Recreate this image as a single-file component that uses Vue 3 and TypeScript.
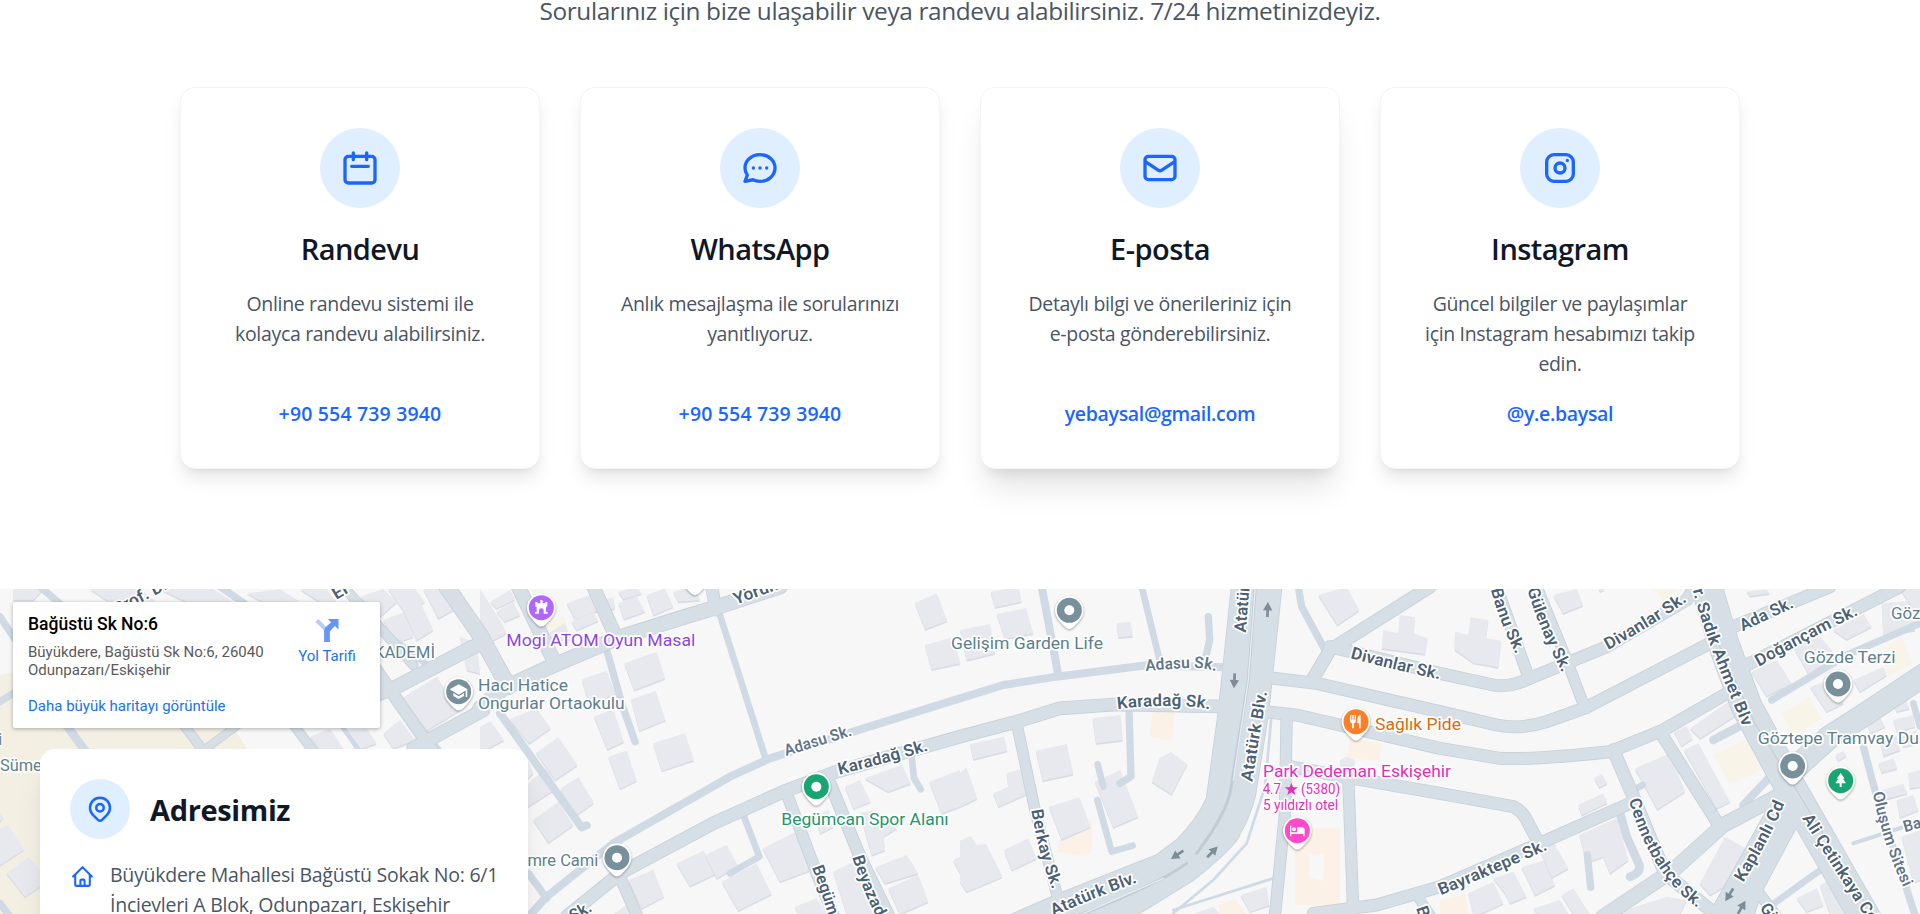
<script setup lang="ts">
interface ContactCard {
  title: string
  text: string
  link: string
  icon: string
  phone?: boolean
  active?: boolean
}

interface StreetLabel {
  text: string
  d: string
  len: number
  minor?: boolean
}

interface PlaceLabel {
  text: string
  x: number
  y: number
  len: number
  color: string
  size?: number
}

interface Pin {
  x: number
  y: number
  color: string
  glyph: string
}

const cards: ContactCard[] = [
  {
    title: 'Randevu',
    text: 'Online randevu sistemi ile kolayca randevu alabilirsiniz.',
    link: '+90 554 739 3940',
    icon: 'M8 7V3m8 4V3m-9 8h10M5 21h14a2 2 0 002-2V7a2 2 0 00-2-2H5a2 2 0 00-2 2v12a2 2 0 002 2z',
    phone: true,
  },
  {
    title: 'WhatsApp',
    text: 'Anlık mesajlaşma ile sorularınızı yanıtlıyoruz.',
    link: '+90 554 739 3940',
    icon: 'M8 12h.01M12 12h.01M16 12h.01M21 12c0 4.418-4.03 8-9 8a9.863 9.863 0 01-4.255-.949L3 20l1.395-3.72C3.512 15.042 3 13.574 3 12c0-4.418 4.03-8 9-8s9 3.582 9 8z',
    phone: true,
  },
  {
    title: 'E-posta',
    text: 'Detaylı bilgi ve önerileriniz için e-posta gönderebilirsiniz.',
    link: 'yebaysal@gmail.com',
    icon: 'M3 8l7.89 5.26a2 2 0 002.22 0L21 8M5 19h14a2 2 0 002-2V7a2 2 0 00-2-2H5a2 2 0 00-2 2v10a2 2 0 002 2z',
    active: true,
  },
  {
    title: 'Instagram',
    text: 'Güncel bilgiler ve paylaşımlar için Instagram hesabımızı takip edin.',
    link: '@y.e.baysal',
    icon: 'M8.4 4h7.2a4.4 4.4 0 014.4 4.4v7.2a4.4 4.4 0 01-4.4 4.4H8.4A4.4 4.4 0 014 15.6V8.4A4.4 4.4 0 018.4 4zM15 12a3 3 0 11-6 0 3 3 0 016 0zM16.4 7.5h.01',
  },
]

// Map geometry is in thirds of a pixel.
const parks: string[] = [
  'M0 285L600 160L700 444L742 507V1002H0Z',
]
const warm: string[] = [
  'M3450 470L3458 392L3524 390L3516 484Z',
  'M3170 815L3190 735L3277 718L3274 822L3250 828Z',
  'M4040 535L4050 478L4146 490L4138 542Z',
  'M3885 975V820L3940 745H4020V978ZM3928 822V892L3970 902L3972 824Z',
  'M3655 975L3705 957L3740 1002H3660Z',
  'M4320 960L4395 942L4405 1002H4320Z',
]
const sand: string[] = [
  'M5140 525L5238 478L5288 570L5190 612Z',
  'M5342 402L5425 352L5464 415L5384 464Z',
  'M5645 240L5655 205L5705 172L5738 250L5665 290Z',
  'M4960 27H5040L4990 62Z',
  'M1590 27H1650L1600 42Z',
  'M1625 145L1690 105L1702 140L1640 155Z',
]

const buildings: string[] = [
  '40,27 130,27 100,60 40,60', '270,27 420,27 470,66 330,66', '480,27 640,27 700,66 560,66',
  '740,40 840,27 900,66 790,66', '900,27 980,27 1010,66 960,66',
  '1080,50 1150,27 1190,66 1140,110', '1150,120 1230,90 1240,170 1185,190', '1165,27 1245,27 1275,66 1210,92',
  '1210,90 1260,65 1300,150 1250,180', '1270,27 1320,27 1370,85 1315,115',
  '1205,355 1310,290 1380,390 1275,455', '1380,170 1430,190 1440,280 1400,270',
  '930,470 990,446 1030,506 960,507', '1040,450 1100,446 1130,490 1080,507', '1150,460 1200,420 1245,480 1180,505',
  '0,745 25,735 72,808 0,855', '20,880 85,832 120,870 120,920 75,950', '0,700 10,712 0,725',
  '1440,27 1500,120 1460,150 1440,120', '1470,65 1530,30 1545,58 1490,85', '1490,95 1540,65 1560,105 1515,125',
  '1450,150 1500,118 1520,160 1470,185', '1630,170 1695,128 1712,178 1650,180', '1700,70 1770,45 1800,90 1725,118', '1715,125 1780,97 1795,122 1730,150',
  '1855,35 1910,20 1925,40 1870,58', '1855,70 1910,48 1935,95 1872,117', '1940,45 1995,25 2020,80 1960,105', '2020,35 2080,20 2100,60 2035,65', '1810,60 1840,52 1845,85 1820,90',
  '1745,298 1820,272 1845,340 1770,380', '1873,250 1970,215 1995,295 1903,330', '1893,358 1967,333 1997,420 1918,452',
  '1782,410 1840,388 1872,485 1822,508', '1825,530 1880,512 1910,602 1860,626', '1960,490 2055,460 2082,540 1985,572',
  '1528,418 1610,385 1652,445 1588,490', '1608,518 1675,472 1732,555 1665,600', '1682,625 1735,592 1782,668 1720,712',
  '1440,440 1472,424 1512,480 1460,507 1440,507', '1584,610 1640,565 1670,625 1584,680', '1600,720 1675,665 1720,735 1645,788',
  '1584,540 1600,580 1584,595', '2030,850 2110,812 2150,880 2070,918', '2115,825 2180,795 2215,858 2150,895',
  '1885,900 1960,870 1992,950 1925,985', '2165,905 2270,850 2315,942 2215,992', '1840,1002 1880,975 1920,1002',
  '2288,805 2385,757 2432,870 2340,905', '2385,980 2450,955 2480,1002 2395,1002', '2535,620 2580,600 2612,665 2560,686',
  '2594,595 2705,555 2732,610 2665,635', '2580,700 2620,690 2690,745 2650,770 2655,810 2615,825', '2445,710 2485,690 2500,740 2460,760',
  '2788,605 2880,570 2880,680 2825,700', '2626,862 2720,825 2755,880 2655,910', '2665,925 2755,885 2785,965 2700,1002', '2500,875 2560,845 2640,1002 2540,1002',
  '2745,68 2810,40 2842,122 2775,148', '2775,195 2860,172 2880,250 2795,268', '2860,840 2880,830 2880,880', '2880,150 2970,132 2985,220 2900,240',
  '2972,35 3055,20 3065,65 2985,82', '2990,102 3078,84 3100,160 3015,175', '3350,130 3392,125 3398,168 3355,172',
  '2910,492 3012,470 3022,512 2920,538', '3108,512 3200,492 3220,582 3128,602', '3278,415 3362,405 3368,480 3288,490',
  '3285,605 3360,570 3415,710 3340,742', '3512,516 3562,552 3515,642 3455,605 3478,535', '3147,680 3238,652 3272,740 3185,778',
  '2880,578 2900,564 2932,655 2880,680', '3020,580 3060,568 3085,640 2995,680 2980,640 3025,620', '2880,782 2912,768 2930,795 2958,792 3008,890 2900,935 2880,905',
  '3012,810 3085,775 3110,835 3035,870', '3722,945 3800,920 3808,975 3750,995', '3580,1002 3640,980 3660,1002', '4020,540 4040,530 4065,540 4062,558 4022,555',
  '3955,45 4040,20 4078,90 4012,135', '4150,150 4195,160 4200,105 4245,112 4240,160 4282,175 4275,222 4145,205',
  '4365,155 4405,165 4412,112 4465,120 4458,175 4503,182 4495,262 4420,248 4364,208',
  '4660,45 4730,27 4750,75 4690,100', '4795,25 4815,27 4800,35', '5240,35 5300,27 5310,40 5250,48',
  '4905,565 5010,520 5055,635 4972,688', '4735,675 4810,640 4822,668 4745,705', '4783,595 4805,582 4822,610 4798,622',
  '4738,765 4850,715 4885,840 4830,880 4810,830 4760,848', '5022,455 5060,438 5078,475 5045,498', '5070,445 5185,365 5225,395 5100,475',
  '5052,510 5095,490 5190,665 5150,685', '5100,910 5175,770 5245,810 5240,880 5130,945',
  '4405,940 4480,905 4510,970 4440,1002 4420,1002', '4480,895 4540,875 4580,950 4530,970 4515,940', '4565,862 4635,840 4665,915 4605,945',
  '4620,810 4660,785 4705,865 4655,892', '4602,985 4680,960 4705,1002 4610,1002', '4685,945 4720,925 4770,1002 4720,1002', '4840,1002 5000,950 5060,960 5040,1002',
  '5255,275 5330,240 5375,310 5300,348', '5430,320 5520,290 5530,370 5480,395', '5380,200 5460,170 5520,240 5430,290', '5500,150 5590,103 5615,140 5540,178', '5645,70 5740,62 5745,150 5650,165', '5700,27 5760,27 5760,95 5740,85',
  '5560,300 5650,260 5660,285 5580,335', '5680,370 5720,360 5728,385 5690,395', '5600,425 5640,412 5655,440 5610,460', '5680,420 5740,405 5745,440 5690,455',
  '5640,480 5690,465 5700,510 5650,528', '5700,470 5750,450 5755,490 5710,500', '5635,550 5680,535 5692,565 5645,578', '5645,630 5710,612 5722,640 5655,658',
  '5690,660 5740,645 5755,690 5700,712', '5725,580 5760,570 5760,620 5730,625', '5705,770 5760,750 5760,900 5740,905', '5390,955 5450,925 5470,975 5420,995', '5460,915 5510,890 5560,1002 5490,1002', '5506,525 5530,512 5540,527 5515,542',
]

const minorRoads: { d: string; w: number }[] = [
  { d: 'M0 110L60 200', w: 22 }, { d: 'M0 365L80 315', w: 22 }, { d: 'M195 430L265 525', w: 26 },
  { d: 'M1020 430L1090 530', w: 14 }, { d: 'M120 20L190 80M660 20L740 75', w: 22 }, { d: 'M1030 20L1180 180L1290 260', w: 20 },
  { d: 'M0 970L30 1010', w: 22 }, { d: 'M1130 260L1210 380L1320 520', w: 24 },
  { d: 'M2155 90L2295 530', w: 20 }, { d: 'M1820 210L1865 370L1905 485', w: 22 }, { d: 'M1500 400L1745 742L1760 736', w: 24 },
  { d: 'M1590 1005L1640 950L1840 790L2190 590L2310 535L2560 455L2880 355L3010 315L3170 290L3440 256L3680 262', w: 24 },
  { d: 'M1585 880L1640 955', w: 22 }, { d: 'M2232 710L2278 830L2190 880', w: 20 }, { d: 'M2735 530L2742 595L2762 628', w: 20 },
  { d: 'M3125 20L3175 285', w: 24 }, { d: 'M3425 20L3480 245', w: 20 }, { d: 'M3625 110L3629 180L3615 240', w: 22 },
  { d: 'M3387 390L3393 590L3360 610', w: 22 }, { d: 'M3293 553L3310 620M3292 660L3335 815L3398 797', w: 20 },
  { d: 'M3895 20L3905 80L3975 210', w: 22 }, { d: 'M3815 400L3795 620L3740 790L3640 900L3520 1000M3520 990L3820 895', w: 8 },
  { d: 'M5315 360L5540 225L5760 130', w: 22 }, { d: 'M5590 500L5630 650L5745 1005', w: 22 }, { d: 'M5560 790L5720 738', w: 12 }, { d: 'M5740 370L5760 440', w: 20 },
  { d: 'M5140 480L5235 430', w: 26 }, { d: 'M5310 590L5230 675', w: 24 }, { d: 'M4860 700L4880 770L4918 855Q4922 880 4890 890', w: 26 },
  { d: 'M4762 825L4772 922', w: 22 }, { d: 'M4905 628L4928 615', w: 20 }, { d: 'M5320 972L5440 885L5480 860', w: 20 },
]

const majorRoads: { d: string; w: number }[] = [
  { d: 'M540 420L612 515', w: 26 }, { d: 'M612 510L760 400', w: 22 }, { d: 'M870 420L945 520', w: 26 },
  { d: 'M1030 20L1240 255', w: 26 }, { d: 'M1140 340L1180 325L1440 190', w: 40 }, { d: 'M1080 200L1310 530', w: 34 },
  { d: 'M1240 505L1450 390', w: 38 }, { d: 'M1340 20L1440 165L1525 320', w: 46 },
  { d: 'M1440 385L1510 325L1640 265L1850 175L2040 115L2170 75L2340 20', w: 42 },
  { d: 'M1555 20L1665 250', w: 40 }, { d: 'M1780 20L1845 165', w: 38 }, { d: 'M2135 20L2148 90', w: 34 },
  { d: 'M1700 1010L1860 880L2140 730L2350 635L2510 575L2880 470L3050 425L3180 385L3350 373L3680 380', w: 36 },
  { d: 'M1860 890L1910 1005', w: 32 }, { d: 'M2360 640L2450 880L2500 1005', w: 32 }, { d: 'M2490 610L2580 830L2665 1005', w: 34 },
  { d: 'M3050 430L3105 690L3175 960', w: 30 },
  { d: 'M3780 290L3950 310L4320 395L4490 435Q4560 450 4640 425L4760 382L5130 190', w: 34 },
  { d: 'M3790 395L3890 405L4320 505L4500 535Q4600 540 4830 515L4990 450L5190 335', w: 34 },
  { d: 'M3860 410L3855 700L3825 1005', w: 32 }, { d: 'M3870 560L4060 595L4320 640L4540 680Q4570 695 4585 730L4620 795', w: 34 },
  { d: 'M4045 600L4060 1005', w: 32 }, { d: 'M3940 295L3990 210L4290 20', w: 36 },
  { d: 'M3990 200L4320 280L4480 315Q4530 325 4600 290L4820 200L5060 60L5085 20', w: 34 },
  { d: 'M3940 1000L4130 975L4320 920L4620 790L4890 670', w: 34 }, { d: 'M4260 960L4290 1005', w: 28 },
  { d: 'M4490 20L4585 290', w: 32 }, { d: 'M4610 20L4700 240L4755 385', w: 30 },
  { d: 'M5200 140L5490 20', w: 34 }, { d: 'M5240 255L5700 20', w: 34 }, { d: 'M5390 560L5490 470L5600 400L5780 280', w: 66 },
  { d: 'M5350 640L5170 735L5020 870L4810 1010', w: 42 }, { d: 'M4980 455L5160 740', w: 34 },
  { d: 'M4840 510L4900 650L4995 880L5150 1005', w: 36 }, { d: 'M5270 930L5330 1010', w: 30 },
  { d: 'M5120 20L5170 190L5240 380L5370 620L5610 1040', w: 90 },
]

const boulevards: string[] = [
  'M3695 20L3655 400L3620 655Q3590 720 3530 780L3470 825L3180 940L3030 1005H3410L3580 900Q3680 820 3710 780Q3750 710 3765 650L3805 400L3845 20Z',
  'M5340 620L5140 980L5110 1010H5260L5285 935L5400 720Z',
]

const streetLabels: StreetLabel[] = [
  { text: 'Prof. Dr.', d: 'M350 105L530 12', len: 190 },
  { text: 'Er', d: 'M1009 60L1075 20', len: 50 },
  { text: 'Yörük', d: 'M2207 74L2350 22', len: 138 },
  { text: 'Adasu Sk.', d: 'M2358 528L2570 462', len: 210, minor: true },
  { text: 'Karadağ Sk.', d: 'M2518 584Q2660 550 2795 508', len: 278 },
  { text: 'Begüm', d: 'M2436 862Q2468 950 2488 1015', len: 154 },
  { text: 'Beyazad', d: 'M2557 832Q2587 930 2632 1015', len: 195 },
  { text: 'Sk.', d: 'M1720 1025L1782 990', len: 68 },
  { text: 'Adasu Sk.', d: 'M3437 273Q3540 264 3580 264T3652 275', len: 212, minor: true },
  { text: 'Karadağ Sk.', d: 'M3352 387Q3450 376 3530 378T3632 390', len: 278 },
  { text: 'Atatürk', d: 'M3737 158L3752 -15', len: 166 },
  { text: 'Atatürk Blv.', d: 'M3757 606Q3777 470 3802 332', len: 274 },
  { text: 'Atatürk Blv.', d: 'M3160 1008Q3290 950 3410 908', len: 272 },
  { text: 'Berkay Sk.', d: 'M3094 690Q3116 830 3160 934', len: 248 },
  { text: 'Divanlar Sk.', d: 'M4050 234Q4190 272 4320 298', len: 276 },
  { text: 'Banu Sk.', d: 'M4472 28Q4501 136 4548 222', len: 210 },
  { text: 'Gülenay Sk.', d: 'M4582 28Q4616 146 4686 276', len: 272 },
  { text: 'Divanlar Sk.', d: 'M4824 210Q4950 142 5060 64', len: 280 },
  { text: 'r. Sadık Ahmet Blv', d: 'M5078 30C5118 180 5168 290 5228 440', len: 438 },
  { text: 'Ada Sk.', d: 'M5228 154L5385 80', len: 172 },
  { text: 'Doğançam Sk.', d: 'M5276 260Q5430 174 5572 106', len: 338 },
  { text: 'Bayraktepe Sk.', d: 'M4322 946Q4480 882 4640 810', len: 350 },
  { text: 'Cennetbahçe Sk.', d: 'M4886 660Q4948 880 5096 986', len: 392 },
  { text: 'Kaplanlı Cd', d: 'M5230 908Q5302 790 5354 670', len: 268 },
  { text: 'Ali Çetinkaya Cd', d: 'M5406 715Q5498 860 5608 1030', len: 375 },
  { text: 'Oluşum Sitesi', d: 'M5618 638Q5648 790 5710 922', len: 300, minor: true },
  { text: 'Ba', d: 'M5715 757L5770 741', len: 54, minor: true },
  { text: 'B', d: 'M4248 985L4262 1025', len: 33 },
  { text: 'Gü', d: 'M5278 985L5320 1040', len: 62 },
]

const slate = '#5e7f8e'
const places: PlaceLabel[] = [
  { text: 'AKADEMİ', x: 1089, y: 235, len: 216, color: slate },
  { text: 'Sümer', x: 0, y: 573, len: 142, color: slate },
  { text: 'i', x: -4, y: 494, len: 10, color: slate },
  { text: 'Hacı Hatice', x: 1434, y: 334, len: 270, color: slate },
  { text: 'Ongurlar Ortaokulu', x: 1434, y: 387, len: 440, color: slate },
  { text: 'Mogi ATOM Oyun Masal', x: 1519, y: 199, len: 567, color: '#8f45e0' },
  { text: 'Emre Cami', x: 1554, y: 858, len: 241, color: slate },
  { text: 'Begümcan Spor Alanı', x: 2344, y: 735, len: 502, color: '#22966b' },
  { text: 'Gelişim Garden Life', x: 2853, y: 206, len: 456, color: slate },
  { text: 'Sağlık Pide', x: 4125, y: 450, len: 258, color: '#d96a10' },
  { text: 'Park Dedeman Eskişehir', x: 3789, y: 591, len: 564, color: '#e62eb8' },
  { text: '4.7', x: 3788, y: 642, len: 55, color: '#e62eb8', size: 42 },
  { text: '(5380)', x: 3903, y: 642, len: 117, color: '#e62eb8', size: 42 },
  { text: '5 yıldızlı otel', x: 3789, y: 690, len: 225, color: '#e62eb8', size: 42 },
  { text: 'Gözde Terzi', x: 5411, y: 248, len: 276, color: slate },
  { text: 'Göztepe Tramvay Du', x: 5273, y: 493, len: 484, color: slate },
  { text: 'Göz', x: 5673, y: 117, len: 88, color: slate },
]

const pinSlate = '#78909c'
const dot = 'M-15 0A15 15 0 1 0 15 0A15 15 0 1 0 -15 0Z'
const pins: Pin[] = [
  { x: 1376, y: 335, color: pinSlate, glyph: 'M0 -22L27 -7L0 9L-27 -7ZM-16 4L0 14L16 4V13L0 22L-16 13ZM21 -4H26V16H21Z' },
  { x: 1624, y: 83, color: '#b066ff', glyph: 'M-3 -23H3V-21L6 -18L3 -15V-13H12V-17H18V-3H14V13H19V18H7V9Q7 2 0 2Q-7 2 -7 9V18H-19V13H-14V-3H-18V-17H-12V-13H-3Z' },
  { x: 2085, y: -11, color: pinSlate, glyph: dot },
  { x: 2449, y: 620, color: '#17a673', glyph: dot },
  { x: 1851, y: 833, color: pinSlate, glyph: dot },
  { x: 3208, y: 91, color: pinSlate, glyph: dot },
  { x: 4068, y: 425, color: '#ff7f27', glyph: 'M-18 -20H-14V-6H-11V-20H-7V-6H-4V-20H0V-3Q0 3 -6 5V20H-12V5Q-18 3 -18 -3ZM14 -20V20H9V5H4V-8Q5 -18 14 -20Z' },
  { x: 3892, y: 752, color: '#ff4acb', glyph: 'M-22 -15H-18V5H-1V-10H14Q22 -10 22 -2V17H18V10H-18V17H-22ZM-4 -4A6 6 0 1 1 -16 -4A6 6 0 1 1 -4 -4Z' },
  { x: 5514, y: 312, color: pinSlate, glyph: dot },
  { x: 5378, y: 558, color: pinSlate, glyph: dot },
  { x: 5522, y: 602, color: '#17a673', glyph: 'M0 -23L12 -6H7L16 8H3V19H-3V8H-16L-7 -6H-12Z' },
]

const arrows = [
  { x: 3803, y: 89, r: 2 }, { x: 3703, y: 302, r: 183 }, { x: 3532, y: 824, r: 236 },
  { x: 3637, y: 816, r: 45 }, { x: 5188, y: 944, r: 212 }, { x: 5225, y: 982, r: 30 },
]
</script>

<template>
  <main class="page">
    <section class="contact">
      <header class="intro">
        <p>Sorularınız için bize ulaşabilir veya randevu alabilirsiniz. 7/24 hizmetinizdeyiz.</p>
      </header>
      <div class="cards">
        <article v-for="card in cards" :key="card.title" class="card" :class="{ active: card.active }">
          <div class="badge large">
            <svg class="icon" viewBox="0 0 24 24"><path :d="card.icon" /></svg>
          </div>
          <h3>{{ card.title }}</h3>
          <p class="text">{{ card.text }}</p>
          <a class="link" :class="{ phone: card.phone }">{{ card.link }}</a>
        </article>
      </div>
    </section>

    <section class="location">
      <svg class="map" viewBox="0 27 5760 975" preserveAspectRatio="none">
        <rect x="0" y="27" width="5760" height="975" fill="#f7f7f7" />
        <path v-for="d in parks" :key="d" :d="d" fill="#f4efe3" />
        <path v-for="d in warm" :key="d" :d="d" fill="#fbf1e7" fill-rule="evenodd" />
        <path v-for="d in sand" :key="d" :d="d" fill="#f9f4e8" />
        <g v-for="p in buildings" :key="p">
          <polygon :points="p" fill="#d9dce3" transform="translate(0 5)" />
          <polygon :points="p" fill="#e8e9ee" />
        </g>
        <g fill="none" stroke-linecap="round" stroke-linejoin="round">
          <path v-for="r in minorRoads" :key="r.d" :d="r.d" stroke="#cfdae4" :stroke-width="r.w" />
          <path v-for="r in majorRoads" :key="r.d" :d="r.d" stroke="#c6d1d9" :stroke-width="r.w + 5" />
          <path v-for="d in boulevards" :key="d" :d="d" stroke="#c6d1d9" stroke-width="5" />
          <path v-for="r in majorRoads" :key="r.d + 'f'" :d="r.d" stroke="#d6dfe6" :stroke-width="r.w" />
          <path v-for="d in boulevards" :key="d + 'f'" :d="d" fill="#d6dfe6" />
          <path d="M3766 20L3745 300L3692 630Q3680 700 3590 820M3560 850Q3480 910 3240 1005" stroke="#c0ccd5" stroke-width="9" />
          <path d="M3766 20L3745 300L3700 600M3490 895L3240 1005" stroke="#e8edf0" stroke-width="4" />
          <path d="M5150 180L5265 430L5380 615L5620 1010" stroke="#c3cbd1" stroke-width="3" />
        </g>
        <g v-for="a in arrows" :key="a.x" :transform="`translate(${a.x} ${a.y}) rotate(${a.r})`">
          <path d="M0 -23L14 2H4V22H-4V2H-14Z" fill="#7d8d97" />
        </g>
        <defs>
          <path v-for="(s, i) in streetLabels" :id="'street-' + i" :key="i" :d="s.d" />
        </defs>
        <text v-for="(s, i) in streetLabels" :key="i" class="street" :class="{ minor: s.minor }">
          <textPath :href="'#street-' + i" :textLength="s.len" lengthAdjust="spacingAndGlyphs">{{ s.text }}</textPath>
        </text>
        <g v-for="p in pins" :key="p.x" :transform="`translate(${p.x} ${p.y})`">
          <path class="drop" d="M-43 0A43 43 0 1 1 43 0C43 22 28 34 12 51Q0 62 -12 51C-28 34 -43 22 -43 0Z" />
          <circle r="37.5" :fill="p.color" />
          <path :d="p.glyph" fill="#fff" />
        </g>
        <text
          v-for="p in places"
          :key="p.text"
          class="place"
          :x="p.x"
          :y="p.y"
          :fill="p.color"
          :font-size="p.size ?? 51"
          :textLength="p.len"
          lengthAdjust="spacingAndGlyphs"
        >{{ p.text }}</text>
        <path d="M3874 608L3879 622L3894 622L3882 631L3886 645L3874 637L3862 645L3866 631L3854 622L3869 622Z" fill="#e62eb8" />
      </svg>

      <div class="place-card">
        <div class="place-info">
          <strong>Bağüstü Sk No:6</strong>
          <span class="place-address">Büyükdere, Bağüstü Sk No:6, 26040 Odunpazarı/Eskişehir</span>
          <a>Daha büyük haritayı görüntüle</a>
        </div>
        <div class="directions">
          <svg viewBox="0 0 24 24">
            <path d="M0 3L3 0L12 9V15Z" fill="#b3cdfd" />
            <path d="M13 0H24V11L20.3 7.3L15 12.8V24H9V13Q9 10 11 8L16.3 3.5Z" fill="#6496fa" />
          </svg>
          <a>Yol Tarifi</a>
        </div>
      </div>

      <div class="address-card">
        <div class="address-head">
          <div class="badge small">
            <svg class="icon" viewBox="0 0 24 24">
              <path d="M17.657 16.657L13.414 20.9a1.998 1.998 0 01-2.827 0l-4.244-4.243a8 8 0 1111.314 0z" />
              <path d="M15 11a3 3 0 11-6 0 3 3 0 016 0z" />
            </svg>
          </div>
          <h3>Adresimiz</h3>
        </div>
        <div class="address-row">
          <svg class="icon" viewBox="0 0 24 24">
            <path d="M3 12l2-2m0 0l7-7 7 7M5 10v10a1 1 0 001 1h3m10-11l2 2m-2-2v10a1 1 0 01-1 1h-3m-6 0a1 1 0 001-1v-4a1 1 0 011-1h2a1 1 0 011 1v4a1 1 0 001 1m-6 0h6" />
          </svg>
          <p>Büyükdere Mahallesi Bağüstü Sokak No: 6/1<br />İncievleri A Blok, Odunpazarı, Eskişehir</p>
        </div>
      </div>
    </section>
  </main>
</template>

<style>
html,
body {
  overflow: hidden;
  background: #fff;
}
</style>

<style scoped>
.page {
  height: 914px;
  overflow: hidden;
  background: #fff;
  font-family: 'Open Sans', 'Noto Sans', sans-serif;
  color: #4a5565;
}

h3,
p {
  margin: 0;
}

.contact {
  width: 1560px;
  height: 589px;
  margin: 0 auto;
}

.intro {
  display: flex;
  height: 28px;
  margin-bottom: 59px;
  align-items: flex-end;
  justify-content: center;
}

.intro p {
  font-size: 24.4px;
  line-height: 35px;
  letter-spacing: -0.37px;
  white-space: nowrap;
}

.cards {
  display: grid;
  grid-template-columns: repeat(4, 1fr);
  gap: 40px;
}

.card {
  display: flex;
  box-sizing: border-box;
  height: 382px;
  padding: 40px 30px 39px;
  flex-direction: column;
  align-items: center;
  border: 1px solid #f3f4f6;
  border-radius: 15px;
  background: #fff;
  box-shadow: 0 12.5px 18.75px -3.75px rgb(0 0 0 / 10%), 0 5px 7.5px -5px rgb(0 0 0 / 10%);
  text-align: center;
}

.card.active {
  box-shadow: 0 25px 31.25px -6.25px rgb(0 0 0 / 10%), 0 10px 12.5px -7.5px rgb(0 0 0 / 10%);
}

.badge {
  display: flex;
  flex: none;
  align-items: center;
  justify-content: center;
  border-radius: 50%;
  background: #e0efff;
}

.badge.large {
  width: 80px;
  height: 80px;
  margin-bottom: 21px;
}

.badge.small {
  width: 60px;
  height: 60px;
}

.icon {
  fill: none;
  stroke: #1a66ff;
  stroke-width: 2;
  stroke-linecap: round;
  stroke-linejoin: round;
}

.large .icon {
  width: 40px;
  height: 40px;
}

.small .icon {
  width: 30px;
  height: 30px;
}

.card h3 {
  margin-bottom: 20px;
  font-size: 29px;
  font-weight: 600;
  line-height: 40px;
  letter-spacing: -0.55px;
  color: #101828;
}

.text {
  width: 280px;
  font-size: 19.5px;
  line-height: 30px;
  letter-spacing: -0.33px;
}

.link {
  margin-top: auto;
  font-size: 19.5px;
  font-weight: 600;
  line-height: 30px;
  letter-spacing: -0.33px;
  color: #1a66ff;
}

.link.phone {
  letter-spacing: 0.17px;
}

.location {
  position: relative;
  height: 325px;
  overflow: hidden;
}

.map {
  display: block;
  width: 1920px;
  height: 325px;
  font-family: Roboto, sans-serif;
}

.street,
.place {
  paint-order: stroke;
  stroke: #fff;
  stroke-width: 10px;
  stroke-linejoin: round;
}

.street {
  font-size: 50px;
  font-weight: 600;
  fill: #4b5f75;
}

.street.minor {
  font-size: 48px;
  font-weight: 600;
  fill: #61758b;
}

.drop {
  fill: #fff;
  filter: drop-shadow(0 3px 3px rgb(0 0 0 / 35%));
}

.place-card {
  position: absolute;
  top: 13px;
  left: 13px;
  display: flex;
  box-sizing: border-box;
  width: 367px;
  height: 126px;
  padding: 10px 15px;
  justify-content: space-between;
  border-radius: 2px;
  background: #fff;
  box-shadow: 0 1px 4px rgb(0 0 0 / 30%);
  font-family: Roboto, sans-serif;
  font-size: 15px;
}

.place-info {
  display: flex;
  width: 250px;
  flex-direction: column;
}

.place-info strong {
  font-size: 17.5px;
  font-weight: 500;
  line-height: 24px;
  color: #000;
}

.place-address {
  margin-top: 7px;
  line-height: 18px;
  color: #5b5b5b;
}

.place-info a {
  margin-top: 18px;
  line-height: 18px;
}

.place-card a {
  color: #1a73e8;
}

.directions {
  display: flex;
  width: 76px;
  padding-top: 7px;
  flex-direction: column;
  align-items: center;
}

.directions svg {
  width: 24px;
  height: 23px;
  margin-bottom: 4px;
}

.directions a {
  line-height: 20px;
}

.address-card {
  position: absolute;
  top: 160px;
  left: 40px;
  box-sizing: border-box;
  width: 488px;
  height: 240px;
  padding: 30px;
  border-radius: 15px;
  background: #fff;
  box-shadow: 0 25px 31.25px -6.25px rgb(0 0 0 / 10%), 0 10px 12.5px -7.5px rgb(0 0 0 / 10%);
}

.address-head {
  display: flex;
  gap: 20px;
  margin-bottom: 20px;
  align-items: center;
}

.address-head h3 {
  padding-top: 2px;
  font-size: 29px;
  font-weight: 700;
  line-height: 40px;
  letter-spacing: -0.36px;
  color: #101828;
}

.address-row {
  display: flex;
  gap: 15px;
}

.address-row .icon {
  width: 25px;
  height: 25px;
  margin-top: 5px;
  flex: none;
}

.address-row p {
  padding-top: 1px;
  font-size: 19.5px;
  line-height: 30px;
  letter-spacing: -0.26px;
  white-space: nowrap;
}
</style>
